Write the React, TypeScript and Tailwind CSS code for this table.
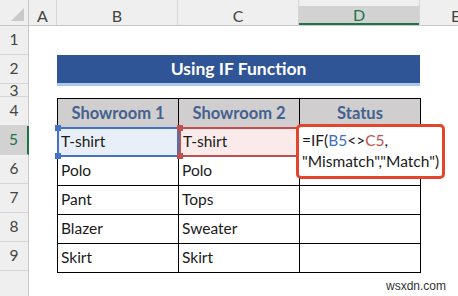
import type { ReactNode } from 'react';

const font = { fontFamily: 'Lato, "Open Sans", sans-serif' };

const cols = [
  { key: 'A', w: 'w-[28px]' },
  { key: 'B', w: 'w-[121px]' },
  { key: 'C', w: 'w-[121px]' },
  { key: 'D', w: 'w-[121px]' },
  { key: 'E', w: 'flex-1' },
];

const rows = [
  { n: '1', h: 'h-[29px]' },
  { n: '2', h: 'h-[29px]' },
  { n: '3', h: 'h-[14px]' },
  { n: '4', h: 'h-[29px]' },
  { n: '5', h: 'h-[29px]' },
  { n: '6', h: 'h-[29px]' },
  { n: '7', h: 'h-[29px]' },
  { n: '8', h: 'h-[29px]' },
  { n: '9', h: 'h-[29px]' },
];

const data = [
  ['Polo', 'Polo'],
  ['Pant', 'Tops'],
  ['Blazer', 'Sweater'],
  ['Skirt', 'Skirt'],
];

function Cell({ children, className = '' }: { children?: ReactNode; className?: string }) {
  return (
    <div className={`w-[121px] h-[29px] border-r border-b border-black flex items-center pl-[3px] text-[15.5px] text-[#1a1a1a] ${className}`}>
      {children}
    </div>
  );
}

function Handle({ pos, color }: { pos: string; color: string }) {
  return <span className={`absolute w-[6px] h-[6px] ${pos} ${color}`} />;
}

export default function App() {
  return (
    <div className="relative w-[458px] h-[296px] bg-white overflow-hidden" style={font}>
      {/* column headers */}
      <div className="h-[26px] bg-[#efefef] border-b border-[#c8c8c8] flex overflow-hidden">
        <div className="w-[29px] shrink-0 border-r border-[#c8c8c8] relative">
          <span className="absolute right-[4px] bottom-[4px] w-0 h-0 border-l-[13px] border-l-transparent border-b-[13px] border-b-[#c9c9c9]" />
        </div>
        {cols.map((c) => (
          <div
            key={c.key}
            className={`${c.w} shrink-0 pt-[6px] flex ${c.key === 'E' ? '' : 'border-r border-[#d6d6d6]'}`}
          >
            <div
              className={`flex-1 flex items-center text-[16px] ${
                c.key === 'D'
                  ? 'justify-center bg-[#d2d2d2] text-[#217346] border-b-2 border-[#217346]'
                  : c.key === 'E'
                  ? 'justify-start pl-[31px] text-[#444] whitespace-nowrap'
                  : 'justify-center text-[#444]'
              }`}
            >
              {c.key}
            </div>
          </div>
        ))}
      </div>

      <div className="flex">
        {/* row headers */}
        <div className="w-[29px] h-[270px] bg-[#efefef] border-r border-[#c8c8c8] flex flex-col">
          {rows.map((r) => (
            <div
              key={r.n}
              className={`${r.h} shrink-0 border-b border-[#d6d6d6] flex justify-center overflow-hidden text-[15.5px] ${
                r.n === '5'
                  ? 'items-center bg-[#d2d2d2] text-[#217346] border-r-2 border-r-[#217346] -mr-px'
                  : r.n === '3'
                  ? 'items-start leading-[14px] -mt-[1px] text-[#444]'
                  : 'items-center text-[#444]'
              }`}
            >
              {r.n}
            </div>
          ))}
        </div>

        {/* sheet */}
        <div className="flex-1 flex flex-col">
          <div className="h-[29px]" />
          <div className="h-[29px] flex">
            <div className="w-[28px]" />
            <div className="w-[363px] h-[31px] bg-[#2f5597] border-b-[3px] border-[#a9c8ea] flex items-center justify-center text-white font-bold text-[17.5px]">
              Using IF Function
            </div>
          </div>
          <div className="h-[14px]" />

          <div className="flex">
            <div className="w-[28px]" />
            <div className="border-l border-t border-black flex flex-col">
              <div className="flex">
                {['Showroom 1', 'Showroom 2', 'Status'].map((h) => (
                  <div
                    key={h}
                    className="w-[121px] h-[29px] bg-[#d0cece] border-r border-b border-black flex items-center justify-center font-bold text-[16.5px] text-[#44618f]"
                  >
                    {h}
                  </div>
                ))}
              </div>

              <div className="flex -ml-px">
                <div className="relative w-[122px] h-[30px] -mt-px bg-[#e9eff8] border-2 border-[#4472c4] flex items-center pl-[2px] text-[15.5px] text-[#1a1a1a]">
                  T-shirt
                  <Handle pos="-left-[4px] -top-[4px]" color="bg-[#4472c4]" />
                  <Handle pos="-left-[4px] -bottom-[4px]" color="bg-[#4472c4]" />
                </div>
                <div className="relative w-[121px] h-[30px] -mt-px bg-[#fbeaea] border-2 border-[#c0504d] flex items-center pl-[2px] text-[15.5px] text-[#1a1a1a]">
                  T-shirt
                  <Handle pos="-left-[4px] -top-[4px]" color="bg-[#c0504d]" />
                  <Handle pos="-left-[4px] -bottom-[4px]" color="bg-[#c0504d]" />
                </div>
                <Cell />
              </div>

              {data.map(([b, c]) => (
                <div key={b} className="flex">
                  <Cell>{b}</Cell>
                  <Cell>{c}</Cell>
                  <Cell />
                </div>
              ))}
            </div>
          </div>
        </div>
      </div>

      {/* formula being edited in D5 */}
      <div className="absolute left-[296px] top-[124px] w-[149px] h-[55px] bg-white border-[3px] border-[#e2452b] rounded-[5px] pl-[3px] pt-[3px] text-[15.5px] leading-[21px] text-[#1a1a1a]">
        <div>
          =IF(<span className="text-[#3f6fbf]">B5</span>&lt;&gt;<span className="text-[#c0504d]">C5</span>,
        </div>
        <div>"Mismatch","Match")</div>
      </div>

      <div className="absolute left-[386px] top-[277px] text-[12px] text-[#333]" style={{ fontFamily: '"Liberation Sans", Arial, sans-serif' }}>
        wsxdn.com
      </div>
    </div>
  );
}
